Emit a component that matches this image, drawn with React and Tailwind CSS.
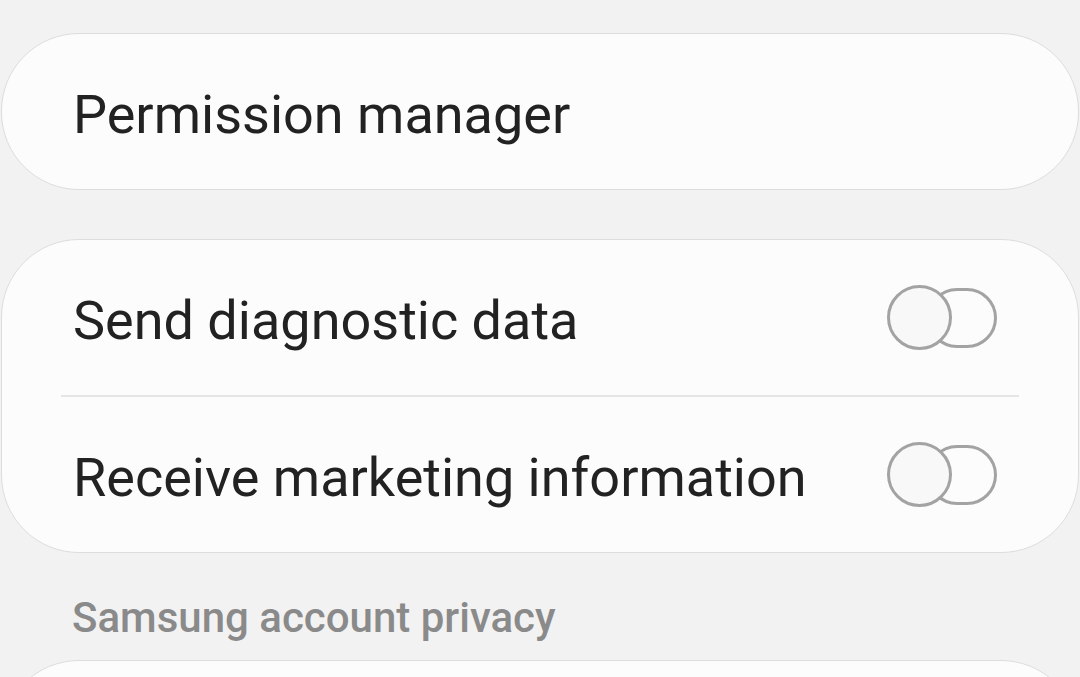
const Toggle = () => (
  <div className="relative w-[110px] h-[65px] shrink-0 flex items-center">
    <div className="absolute right-0 w-[70px] h-[60px] rounded-full border-[3px] border-[#a3a3a3]" />
    <div className="absolute left-0 w-[65px] h-[65px] rounded-full border-[3px] border-[#a3a3a3] bg-[#f8f8f8]" />
  </div>
);

const Row = ({ label, children }) => (
  <div className="flex items-center justify-between pl-[71px] pr-[81px] h-[155px] shrink-0">
    <span className="text-[54px] text-[#222] leading-none mt-[7px]">{label}</span>
    {children}
  </div>
);

export default function App() {
  return (
    <div
      className="w-[1080px] h-[677px] overflow-hidden bg-[#f2f2f2] pt-[33px] flex flex-col"
      style={{ fontFamily: 'Roboto, "Noto Sans", sans-serif' }}
    >
      <div className="shrink-0 mx-[1px] rounded-[78px] bg-[#fcfcfc] border border-[#dddddd]">
        <Row label="Permission manager" />
      </div>

      <div className="shrink-0 mt-[49px] mx-[1px] rounded-[78px] bg-[#fcfcfc] border border-[#dddddd]">
        <Row label="Send diagnostic data">
          <Toggle />
        </Row>
        <div className="mx-[59px] h-[2px] bg-[#e5e5e5]" />
        <Row label="Receive marketing information">
          <Toggle />
        </Row>
      </div>

      <div className="shrink-0 h-[107px] flex items-center pl-[72px] pt-[22px]">
        <span className="text-[42px] font-medium text-[#8a8a8a] leading-none">Samsung account privacy</span>
      </div>

      <div className="shrink-0 mx-[1px] h-[157px] rounded-[78px] bg-[#fcfcfc] border border-[#dddddd]" />
    </div>
  );
}
